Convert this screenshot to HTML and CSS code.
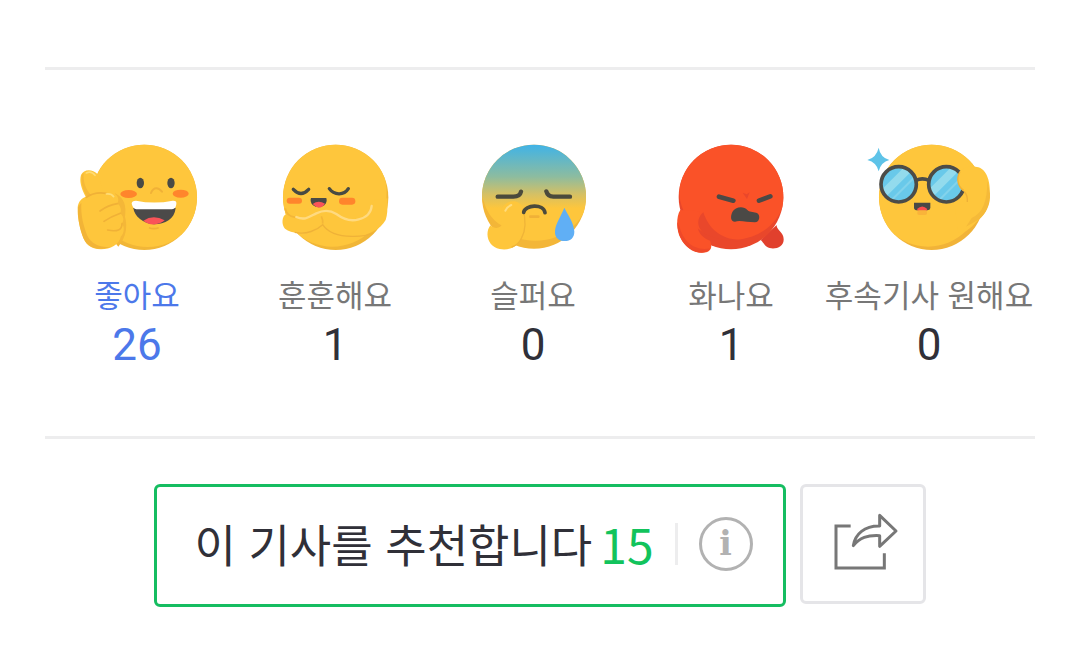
FILE: index.html
```html
<!DOCTYPE html>
<html lang="ko">
<head>
<meta charset="utf-8">
<meta name="viewport" content="width=device-width, initial-scale=1">
<title>기사 반응</title>
<link rel="stylesheet" href="styles.css">
</head>
<body>
<main class="page">
  <section class="reactions" aria-label="기사 반응">
    <div class="reaction-list">
    <button class="reaction reaction-selected" type="button">
      <svg class="face" viewBox="0 0 432 390" aria-hidden="true">
        <defs><clipPath id="c1"><circle cx="238" cy="202" r="158"/></clipPath></defs>
        <circle cx="238" cy="202" r="158" fill="#f1b637"/>
        <circle cx="248" cy="190" r="161" fill="#fec63c" clip-path="url(#c1)"/>
        <path d="M150 190C180 205 184 230 180 260C188 290 184 320 160 350L120 300Z" fill="#f4b738"/>
        <path d="M62 200C48 174 43 153 48 135C56 117 82 116 98 133C108 150 106 170 119 190L142 189C158 193 164 207 157 221C167 226 170 240 166 250C176 260 178 270 171 281C180 292 177 310 168 319C162 345 136 358 108 358C76 357 60 342 52 315C42 287 37 258 38 232C40 214 50 205 62 200Z" fill="#fec63c"/>
        <path d="M39 232C37 268 48 315 60 333C76 358 108 362 137 350C110 354 80 344 67 317C55 286 47 256 49 218Z" fill="#f2b437"/>
        <path d="M50 135C47 155 54 180 66 201L78 196C62 175 54 158 56 128Z" fill="#f5b938"/>
        <path d="M64 202Q88 185 123 190M157 221Q130 225 105 243M166 250Q138 260 117 274M171 281Q171 309 128 300" fill="none" stroke="#f0b137" stroke-width="5" stroke-linecap="round"/>
        <path d="M64 129Q79 121 90 136M124 192Q139 190 146 200" fill="none" stroke="#ffdc74" stroke-width="5" stroke-linecap="round"/>
        <ellipse cx="226" cy="159" rx="11" ry="16" fill="#494a45"/><ellipse cx="318" cy="159" rx="11" ry="16" fill="#494a45"/>
        <ellipse cx="191" cy="192" rx="25" ry="12" fill="#ff852c"/><ellipse cx="347" cy="191" rx="24" ry="12" fill="#ff852c"/>
        <path d="M258 189C266 169 281 172 291 185" fill="none" stroke="#f0b137" stroke-width="6" stroke-linecap="round"/>
        <path d="M205 234H332C329 267 300 283 267 283C232 280 208 258 205 234Z" fill="#4b4a49"/>
        <path d="M235 272Q265 252 299 271C282 287 251 287 235 272Z" fill="#fa5458"/>
        <path d="M213 212Q268 223 323 212Q336 211 334 222Q333 237 321 238H214Q204 236 200 221Q200 212 213 212Z" fill="#fff"/>
        <path d="M252 293Q266 299 281 293" fill="none" stroke="#f0b137" stroke-width="5"/>
      </svg>
      <span class="label">좋아요</span><span class="count">26</span>
    </button>
    <button class="reaction" type="button">
      <svg class="face" viewBox="-6 0 432 390" aria-hidden="true">
        <defs><clipPath id="c2"><circle cx="212" cy="202" r="158"/></clipPath></defs>
        <circle cx="212" cy="202" r="158" fill="#f1b637"/>
        <circle cx="202" cy="187" r="163" fill="#fec63c" clip-path="url(#c2)"/>
        <path d="M64 252C50 258 49 285 60 296C81 313 116 309 142 299Q159 292 171 281C187 307 220 317 256 318C306 320 346 299 362 270Q369 252 367 205L328 210C320 250 282 274 244 266C213 253 187 226 164 260C127 277 92 269 64 252Z" fill="#fec63c"/>
        <path d="M89 307C125 315 156 300 173 284C189 308 224 319 260 319C288 320 311 315 325 309" fill="none" stroke="#efb238" stroke-width="4"/>
        <path d="M61 235Q63 257 91 262M169 259Q174 268 173 281" fill="none" stroke="#f3b638" stroke-width="5"/>
        <path d="M94 261C120 273 135 259 154 250C173 241 195 240 214 252C237 269 258 275 281 268C306 262 318 250 320 228" fill="none" stroke="#ffda80" stroke-width="7" stroke-linecap="round"/>
        <path d="M85 178Q108 203 131 178M193 176C207 196 237 197 250 176" fill="none" stroke="#484a43" stroke-width="10" stroke-linecap="round"/>
        <rect x="65" y="203" width="46" height="18" rx="9" fill="#ff852c"/><rect x="222" y="203" width="49" height="21" rx="10" fill="#ff852c"/>
        <path d="M138 204H184Q188 216 178 226Q160 238 143 225Q134 215 138 204Z" fill="#494a46"/>
        <path d="M143 222Q160 209 180 221Q163 244 143 222Z" fill="#fa5458"/>
      </svg>
      <span class="label">훈훈해요</span><span class="count">1</span>
    </button>
    <button class="reaction" type="button">
      <svg class="face" viewBox="-12 0 432 390" aria-hidden="true">
        <defs>
          <linearGradient id="blue" x1="0" y1="44" x2="0" y2="235" gradientUnits="userSpaceOnUse"><stop stop-color="#40b3e7"/><stop offset=".5" stop-color="#8cbca0"/><stop offset=".78" stop-color="#d5c064"/><stop offset="1" stop-color="#fec63c"/></linearGradient>
          <clipPath id="c3"><circle cx="207" cy="200" r="156"/></clipPath>
        </defs>
        <circle cx="207" cy="200" r="156" fill="#f3b638"/>
        <ellipse cx="211" cy="184" rx="161" ry="148" fill="url(#blue)" clip-path="url(#c3)"/>
        <path d="M52 205Q59 267 97 296L113 288C76 268 62 235 57 215Z" fill="#f3b638"/>
        <path d="M76 286C89 298 107 296 113 280C104 257 105 233 123 221C143 207 167 214 175 236C183 255 184 300 172 321C158 352 132 362 104 357C71 351 57 313 76 286Z" fill="#fec63c"/>
        <path d="M174 236Q188 291 170 323Q160 345 140 351" fill="none" stroke="#efb438" stroke-width="4"/>
        <path d="M121 242Q128 229 139 225" fill="none" stroke="#ffdc7d" stroke-width="6" stroke-linecap="round"/>
        <path d="M98 200H145Q165 200 168 185M244 184Q248 200 265 200H315" fill="none" stroke="#4b4a3c" stroke-width="13" stroke-linecap="round"/>
        <path d="M176 247C180 224 236 220 240 248" fill="none" stroke="#4b4a3c" stroke-width="11" stroke-linecap="round"/>
        <path d="M196 260H220" stroke="#f0b137" stroke-width="8" stroke-linecap="round"/>
        <path d="M298 233C307 252 327 278 328 305C328 323 317 333 299 333C281 333 269 322 270 305C270 283 289 257 298 233Z" fill="#60aff5"/>
      </svg>
      <span class="label">슬퍼요</span><span class="count">0</span>
    </button>
    <button class="reaction" type="button">
      <svg class="face" viewBox="-3 0 432 390" aria-hidden="true">
        <defs><clipPath id="c4"><circle cx="213" cy="201" r="157"/></clipPath></defs>
        <path d="M350 285C348 299 372 307 371 329C371 349 348 359 329 354C313 350 310 336 302 330Z" fill="#e1402d"/>
        <circle cx="213" cy="201" r="157" fill="#e9472b"/>
        <ellipse cx="217" cy="186" rx="159" ry="144" fill="#fa5228" clip-path="url(#c4)"/>
        <path d="M61 240C47 260 50 304 61 323C75 353 108 373 139 367C157 360 156 346 150 332C114 318 104 292 120 244Z" fill="#fa5228"/>
        <path d="M52 276C51 325 85 369 124 368Q144 368 151 355C100 365 69 331 59 292Z" fill="#ef4929"/>
        <path d="M130 247C103 270 113 308 151 319C177 327 205 334 237 335V330C182 327 146 296 130 247Z" fill="#e9472b"/>
        <path d="M177 200L220 212M297 212L331 199" stroke="#4b4946" stroke-width="14" stroke-linecap="round"/>
        <path d="M248 188L260 193L269 187L261 207Z" fill="#e9472b"/>
        <path d="M217 246C225 230 251 226 262 240C272 249 283 244 292 250C302 256 299 278 284 277C263 277 239 270 225 275C211 275 211 259 217 246Z" fill="#4b4946"/>
      </svg>
      <span class="label">화나요</span><span class="count">1</span>
    </button>
    <button class="reaction" type="button">
      <svg class="face" viewBox="6 0 432 390" aria-hidden="true">
        <defs><clipPath id="c5"><circle cx="230" cy="202" r="158"/></clipPath><clipPath id="l1"><circle cx="131" cy="163" r="49"/></clipPath><clipPath id="l2"><circle cx="274" cy="163" r="49"/></clipPath></defs>
        <circle cx="230" cy="202" r="158" fill="#f1b338"/>
        <circle cx="219" cy="188" r="162" fill="#fec63c" clip-path="url(#c5)"/>
        <path d="M71 53Q76 82 103 90Q78 96 71 124Q65 97 37 90Q64 83 71 53Z" fill="#5ec3e8"/>
        <circle cx="131" cy="163" r="50" fill="#69c9ea"/><circle cx="274" cy="163" r="50" fill="#69c9ea"/>
        <path d="M79 180L154 105L171 122L96 197Z" fill="#93dbed" clip-path="url(#l1)"/>
        <path d="M220 180L295 105L312 122L237 197Z" fill="#93dbed" clip-path="url(#l2)"/>
        <path d="M113 207L176 144M256 207L319 144" stroke="#83d3ec" stroke-width="6"/>
        <g fill="none" stroke="#4c4c48" stroke-width="11"><circle cx="131" cy="163" r="53"/><circle cx="274" cy="163" r="53"/><path d="M183 151Q202 142 222 151"/></g>
        <path d="M324 184C307 169 304 138 315 124C329 110 352 106 370 112C397 120 407 160 404 194C404 221 394 248 373 267C353 288 333 310 310 309L300 235Q331 218 332 187Z" fill="#fec63c"/>
        <path d="M397 153Q397 200 385 228Q375 252 350 264L333 290L374 267C393 250 407 225 405 190Z" fill="#f5ba39"/>
        <path d="M315 125C302 147 310 171 326 181M328 185Q338 194 337 216" fill="none" stroke="#eeb138" stroke-width="4"/>
        <path d="M177 218H226V234Q225 241 217 241H187Q178 241 177 234Z" fill="#494846"/>
        <path d="M186 237Q202 222 217 237L214 242H189Z" fill="#fa4d4e"/>
        <rect x="187" y="241" width="29" height="14" rx="5" fill="#f9b43a"/>
      </svg>
      <span class="label">후속기사 원해요</span><span class="count">0</span>
    </button>
    </div>
  </section>
  <section class="actions" aria-label="기사 추천 및 공유">
    <div class="recommend">
      <button class="recommend-button" type="button"><span>이 기사를 추천합니다</span><span class="recommend-count">15</span></button>
      <span class="divider"></span>
      <button class="info" type="button" aria-label="추천 안내">i</button>
    </div>
    <button class="share" type="button" aria-label="공유하기">
      <svg class="share-icon" viewBox="69 36 360 342" aria-hidden="true">
        <g fill="none" stroke="#777" stroke-width="9">
          <path d="M212 153H168V279H313V235"/>
          <path d="M299 121L348 168L299 214V182C262 180 239 188 220 212C225 177 254 152 299 153Z" stroke-linejoin="round"/>
        </g>
      </svg>
    </button>
  </section>
</main>
</body>
</html>
```
FILE: styles.css
```css
* {
  box-sizing: border-box;
}

body {
  margin: 0;
  background: #fff;
  color: #303038;
  font-family: "Noto Sans CJK KR", sans-serif;
}

button {
  margin: 0;
  padding: 0;
  border: 0;
  background: transparent;
  color: inherit;
  font: inherit;
  cursor: pointer;
}

.page {
  padding: 67px 45px 0;
}

.reactions {
  padding: 60px 0 64px;
  border-top: 3px solid #ededee;
  border-bottom: 3px solid #ededee;
}

.reaction-list {
  display: grid;
  grid-template-columns: repeat(5, minmax(0, 1fr));
  margin: 0 7px 0 -7px;
}

.reaction {
  display: flex;
  flex-direction: column;
  align-items: center;
}

.face {
  display: block;
  width: 144px;
  height: 130px;
}

.label {
  margin-top: 10px;
  color: #777;
  font-size: 31px;
  line-height: 48px;
  white-space: nowrap;
}

.count {
  font-family: Roboto, sans-serif;
  font-size: 44px;
  line-height: 54px;
}

.reaction-selected,
.reaction-selected .label {
  color: #4c78ea;
}

.actions {
  display: flex;
  justify-content: center;
  align-items: flex-start;
  gap: 14px;
  padding-top: 45px;
}

.recommend {
  display: flex;
  align-items: center;
  padding: 0 30px 4px 37px;
  border: 3px solid #16bd61;
  border-radius: 6px;
}

.recommend-button {
  display: flex;
  align-items: center;
  gap: 8px;
  font-size: 45px;
  line-height: 113px;
  white-space: nowrap;
}

.recommend-count {
  color: #12c35c;
  font-size: 48px;
}

.divider {
  width: 3px;
  height: 42px;
  margin: 0 21px;
  background: #ededee;
}

.info {
  width: 54px;
  height: 54px;
  border: 3px solid #b2b2b2;
  border-radius: 50%;
  color: #b2b2b2;
  font-family: "DejaVu Serif", serif;
  font-size: 33px;
  font-weight: bold;
  line-height: 46px;
}

.share {
  border: 3px solid #e5e5e8;
  border-radius: 6px;
}

.share-icon {
  display: block;
  width: 120px;
  height: 114px;
}
```
